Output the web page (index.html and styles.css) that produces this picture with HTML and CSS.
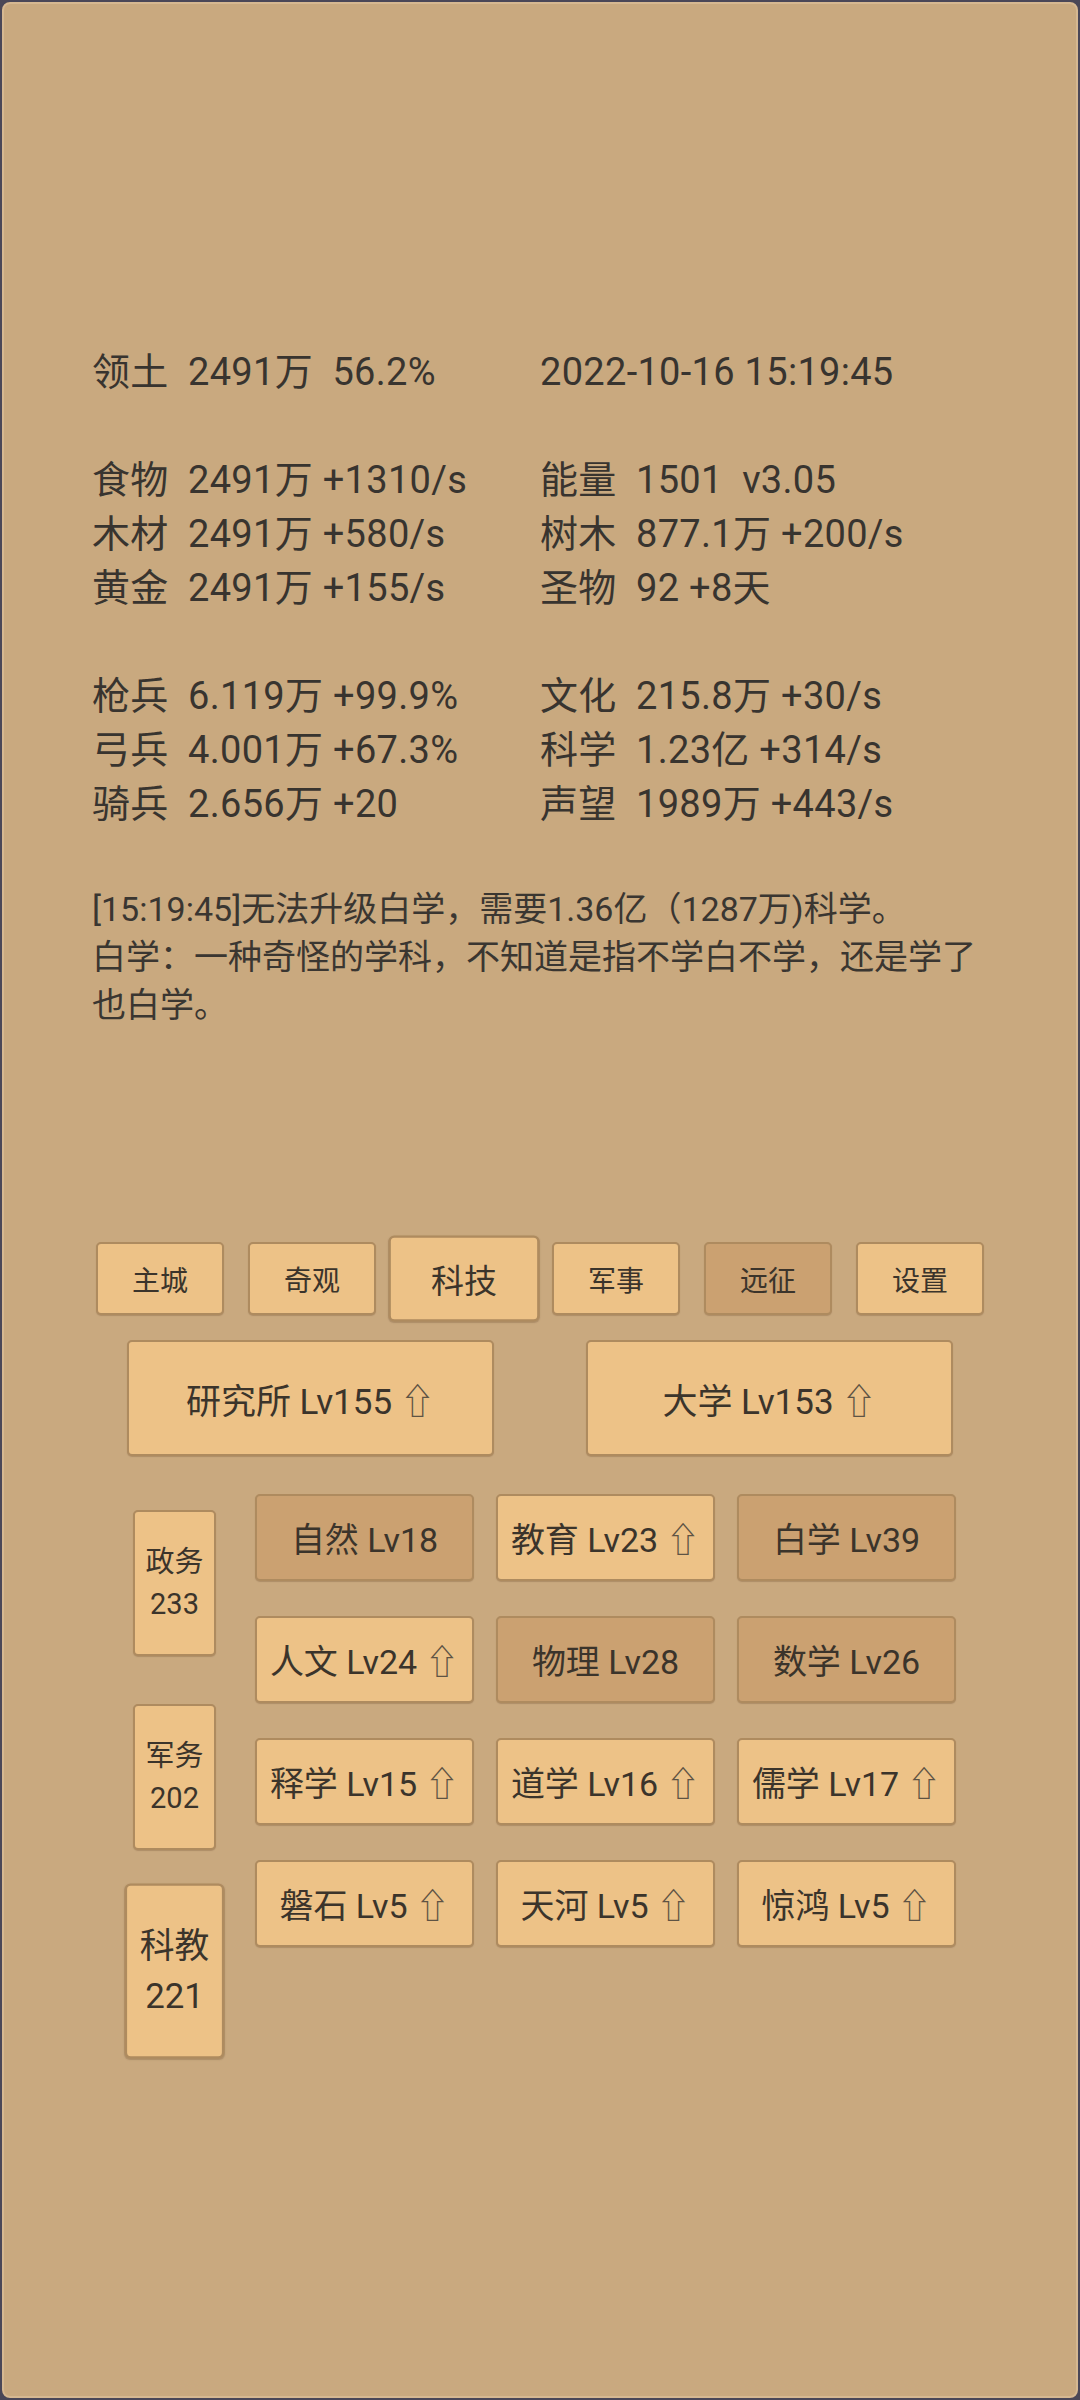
FILE: index.html
```html
<!DOCTYPE html>
<html lang="zh-CN">
<head>
<meta charset="utf-8">
<title>科技</title>
<link rel="stylesheet" href="styles.css">
</head>
<body>
<div class="screen">
  <div class="stats">
    <div class="group">
      <div class="cell">领土  2491万  56.2%</div>
      <div class="cell">2022-10-16 15:19:45</div>
    </div>
    <div class="group">
      <div class="cell">食物  2491万 +1310/s</div>
      <div class="cell">能量  1501  v3.05</div>
      <div class="cell">木材  2491万 +580/s</div>
      <div class="cell">树木  877.1万 +200/s</div>
      <div class="cell">黄金  2491万 +155/s</div>
      <div class="cell">圣物  92 +8天</div>
    </div>
    <div class="group">
      <div class="cell">枪兵  6.119万 +99.9%</div>
      <div class="cell">文化  215.8万 +30/s</div>
      <div class="cell">弓兵  4.001万 +67.3%</div>
      <div class="cell">科学  1.23亿 +314/s</div>
      <div class="cell">骑兵  2.656万 +20</div>
      <div class="cell">声望  1989万 +443/s</div>
    </div>
  </div>

  <div class="message">
    <p>[15:19:45]无法升级白学，需要1.36亿（1287万)科学。</p>
    <p>白学：一种奇怪的学科，不知道是指不学白不学，还是学了也白学。</p>
  </div>

  <nav class="tabs">
    <div class="btn tab">主城</div>
    <div class="btn tab">奇观</div>
    <div class="btn tab active">科技</div>
    <div class="btn tab">军事</div>
    <div class="btn tab dark">远征</div>
    <div class="btn tab">设置</div>
  </nav>

  <div class="buildings">
    <div class="btn building">研究所 Lv155 <span class="up">⇧</span></div>
    <div class="btn building">大学 Lv153 <span class="up">⇧</span></div>
  </div>

  <div class="tech-area">
    <div class="sidebar">
      <div class="btn side"><span>政务</span><span>233</span></div>
      <div class="btn side"><span>军务</span><span>202</span></div>
      <div class="btn side active"><span>科教</span><span>221</span></div>
    </div>
    <div class="tech-grid">
      <div class="btn tech dark">自然 Lv18</div>
      <div class="btn tech">教育 Lv23 <span class="up">⇧</span></div>
      <div class="btn tech dark">白学 Lv39</div>
      <div class="btn tech">人文 Lv24 <span class="up">⇧</span></div>
      <div class="btn tech dark">物理 Lv28</div>
      <div class="btn tech dark">数学 Lv26</div>
      <div class="btn tech">释学 Lv15 <span class="up">⇧</span></div>
      <div class="btn tech">道学 Lv16 <span class="up">⇧</span></div>
      <div class="btn tech">儒学 Lv17 <span class="up">⇧</span></div>
      <div class="btn tech">磐石 Lv5 <span class="up">⇧</span></div>
      <div class="btn tech">天河 Lv5 <span class="up">⇧</span></div>
      <div class="btn tech">惊鸿 Lv5 <span class="up">⇧</span></div>
    </div>
  </div>
</div>
</body>
</html>
```

FILE: styles.css
```css
html, body {
  margin: 0;
  padding: 0;
  background: #4a4757;
}

body {
  font-family: Roboto, "Noto Sans CJK SC", sans-serif;
  color: #38342f;
}

.screen {
  box-sizing: border-box;
  width: 1080px;
  height: 2400px;
  overflow: hidden;
  background: #c9a97f;
  border: 2px solid #4a4757;
  border-radius: 10px;
  box-shadow: inset 0 0 0 2px #d6b891;
  padding: 343px 90px 0 90px;
}

.stats {
  font-size: 38px;
  line-height: 54px;
  letter-spacing: 0.3px;
}

.group {
  display: grid;
  grid-template-columns: 448px 1fr;
}

.group + .group {
  margin-top: 54px;
}

.cell {
  white-space: pre;
}

.message {
  margin-top: 54px;
  font-size: 34px;
  line-height: 48px;
  color: #3a3631;
}

.message p {
  margin: 0;
}

.btn {
  box-sizing: border-box;
  background: #edc287;
  border: 2px solid #ae8b5f;
  border-radius: 5px;
  box-shadow: 0 1px 1px rgba(90, 60, 30, 0.25);
  display: flex;
  align-items: center;
  justify-content: center;
  color: #3b342b;
  white-space: nowrap;
}

.btn.dark {
  background: #cba171;
}

.up {
  color: #5e5344;
  font-family: "Noto Sans CJK SC", "DejaVu Sans", sans-serif;
  margin-left: 8px;
}

.tabs {
  margin-top: 213px;
  display: flex;
  justify-content: center;
  gap: 24px;
}

.tab {
  width: 128px;
  height: 73px;
  font-size: 28px;
}

.tab.active {
  transform: scale(1.18);
}

.buildings {
  margin-top: 25px;
  display: flex;
  justify-content: center;
  gap: 92px;
}

.building {
  width: 367px;
  height: 116px;
  font-size: 35px;
}

.tech-area {
  margin-top: 38px;
  padding-left: 41px;
  display: flex;
  gap: 39px;
  align-items: flex-start;
}

.sidebar {
  width: 83px;
  padding-top: 16px;
  display: flex;
  flex-direction: column;
  gap: 48px;
}

.side {
  width: 83px;
  height: 146px;
  flex-direction: column;
  font-size: 29px;
  line-height: 42px;
}

.side.active {
  transform: scale(1.2);
}

.tech-grid {
  display: grid;
  grid-template-columns: repeat(3, 219px);
  grid-auto-rows: 87px;
  column-gap: 22px;
  row-gap: 35px;
}

.tech {
  font-size: 34px;
}
```
